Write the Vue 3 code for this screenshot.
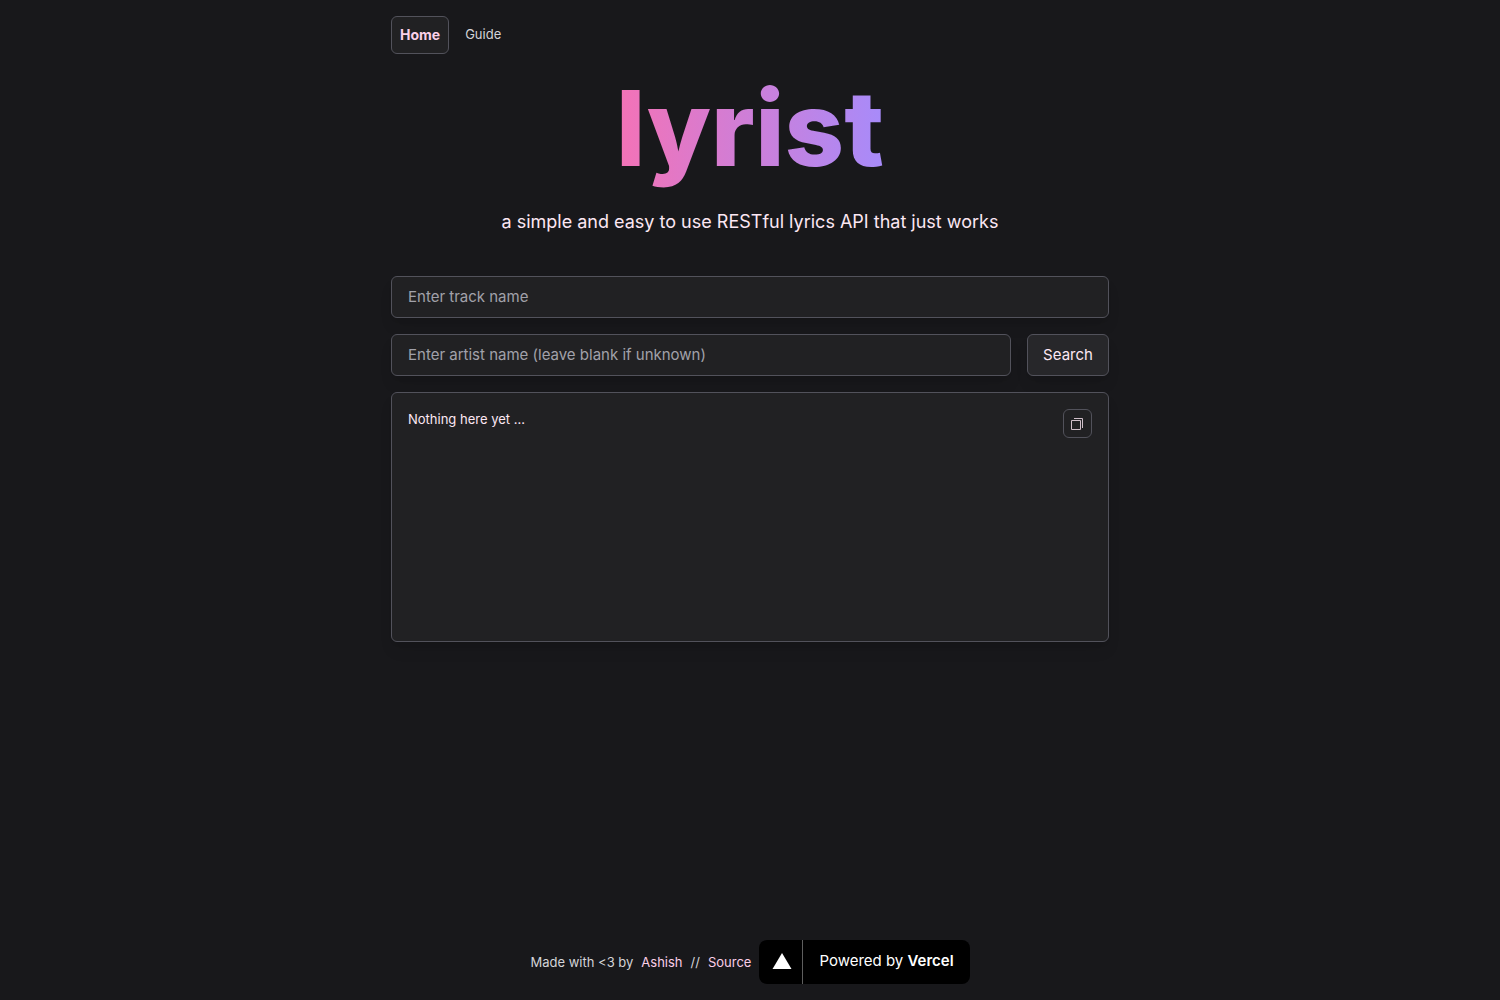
<script setup>
import { ref } from 'vue'

const track = ref('')
const artist = ref('')
const lyrics = ref('Nothing here yet ...')

function copyLyrics() {
  navigator.clipboard?.writeText(lyrics.value)
}
</script>

<template>
  <div class="page">
    <nav class="nav">
      <a class="nav-link active" href="#home">Home</a>
      <a class="nav-link" href="#guide">Guide</a>
    </nav>

    <header class="hero">
      <h1 class="title">lyrist</h1>
      <p class="tagline">a simple and easy to use RESTful lyrics API that just works</p>
    </header>

    <main class="main">
      <form class="form" @submit.prevent>
        <input v-model="track" class="field" type="text" aria-label="Track name" placeholder="Enter track name" />
        <div class="row">
          <input
            v-model="artist"
            class="field"
            type="text"
            aria-label="Artist name"
            placeholder="Enter artist name (leave blank if unknown)"
          />
          <button class="search" type="submit">Search</button>
        </div>
      </form>

      <section class="result">
        <p class="lyrics">{{ lyrics }}</p>
        <button class="copy" type="button" aria-label="Copy lyrics" @click="copyLyrics">
          <svg width="15" height="15" viewBox="0 0 15 15" fill="none" stroke="currentColor" aria-hidden="true">
            <path d="M1.5 4.5h9v9h-9z" />
            <path d="M4 2.500h8.500v9.500" />
          </svg>
        </button>
      </section>
    </main>

    <footer class="footer">
      <span>Made with &lt;3 by</span>
      <a class="footer-link" href="#ashish">Ashish</a>
      <span>//</span>
      <a class="footer-link" href="#source">Source</a>
      <a class="vercel" href="#vercel">
        <span class="vercel-mark">
          <svg width="20" height="16" viewBox="0 0 20 16" aria-hidden="true">
            <path d="M10 0l9.500 16H.5z" fill="#fff" />
          </svg>
        </span>
        <span class="vercel-text">Powered by <b>Vercel</b></span>
      </a>
    </footer>
  </div>
</template>

<style>
body {
  margin: 0;
  background: #18181b;
}
</style>

<style scoped>
.page {
  box-sizing: border-box;
  display: flex;
  flex-direction: column;
  min-height: 100vh;
  max-width: 750px;
  margin: 0 auto;
  padding: 16px;
  color: #fce7f3;
  font-family: Inter, "Liberation Sans", sans-serif;
  font-size: 13px;
  line-height: 20px;
}

a {
  color: inherit;
  text-decoration: none;
}

.nav {
  display: flex;
  align-items: flex-start;
  gap: 8px;
}

.nav-link {
  padding: 8px;
  color: #d4d4d8;
}

.nav-link.active {
  border: 1px solid #52525b;
  border-radius: 6px;
  background: #212123;
  color: #fbcfe8;
  font-size: 14px;
  font-weight: 700;
}

.hero {
  display: flex;
  flex-direction: column;
  align-items: center;
  padding-top: 12px;
}

.title {
  margin: 0;
  background: linear-gradient(to right, #f472b6, #a78bfa);
  background-clip: text;
  color: transparent;
  font-size: 104px;
  font-weight: 800;
  line-height: 124px;
}

.tagline {
  margin: 16px 0 0;
  font-size: 18px;
  line-height: 32px;
  text-align: center;
}

.main,
.form {
  display: flex;
  flex-direction: column;
  gap: 16px;
}

.main {
  padding-top: 38px;
}

.row {
  display: flex;
  gap: 16px;
}

.field,
.search,
.result,
.copy {
  box-sizing: border-box;
  border: 1px solid #52525b;
  border-radius: 6px;
  background: #212123;
  color: #fce7f3;
  font-family: inherit;
}

.field,
.search,
.result {
  box-shadow: 0 10px 15px -3px rgb(0 0 0 / 10%), 0 4px 6px -4px rgb(0 0 0 / 10%);
}

.field {
  flex: 1;
  min-width: 0;
  padding: 8px 16px;
  font-size: 15px;
  line-height: 24px;
}

.field::placeholder {
  color: #a1a1aa;
  opacity: 1;
}

.search {
  width: 82px;
  padding: 8px 0;
  background: #27272a;
  font-size: 15px;
  line-height: 24px;
}

.result {
  display: flex;
  align-items: flex-start;
  justify-content: space-between;
  min-height: 250px;
  padding: 16px;
}

.lyrics {
  margin: 0;
}

.copy {
  display: grid;
  place-items: center;
  width: 29px;
  height: 29px;
  padding: 0;
}

.copy svg {
  opacity: 0.8;
}

.footer {
  display: flex;
  align-items: center;
  justify-content: center;
  gap: 8px;
  margin-top: auto;
  color: #d4d4d8;
}

.footer-link {
  color: #fbcfe8;
}

.vercel {
  display: flex;
  height: 44px;
  border-radius: 8px;
  background: #000;
  color: #fff;
  font-size: 15px;
}

.vercel-mark {
  display: grid;
  place-items: center;
  width: 40px;
  padding: 0 0 2px 3px;
  border-right: 1px solid #5e5e5e;
}

.vercel-text {
  padding: 0 16px;
  line-height: 42px;
}

.vercel-text b {
  font-weight: 600;
}
</style>
